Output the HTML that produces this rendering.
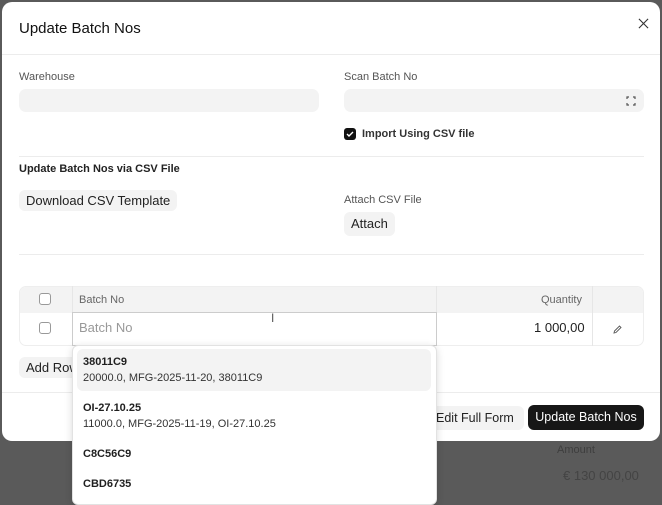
<!DOCTYPE html>
<html><head><meta charset="utf-8"><style>
*{box-sizing:border-box;margin:0;padding:0}
body{width:662px;height:500px;overflow:hidden;background:#5a5a5a;font-family:"Liberation Sans",sans-serif;color:#1f1f1f;position:relative}
.abs{position:absolute;white-space:nowrap}
.modal{left:2px;top:2px;width:658px;height:439px;background:#fff;border-radius:10px}
.lbl{font-size:11px;color:#555}
.inp{background:#f3f3f3;border-radius:7px;height:23px}
.btn{background:#f3f3f3;border-radius:6px;font-size:13px;color:#222;padding:0 7px;line-height:21px}
.hr{height:1px;background:#ececec}
.cb{width:12px;height:12px;border:1px solid #999;border-radius:3px;background:#fff}
</style></head><body>
<div class="abs" style="left:557px;top:444px;font-size:11px;color:#3e3e3e">Amount</div>
<div class="abs" style="left:563px;top:468px;font-size:13px;color:#444">€ 130 000,00</div>
<div class="abs modal"></div>
<div class="abs" style="left:19px;top:20px;font-size:15px;color:#111">Update Batch Nos</div>
<svg class="abs" style="left:638px;top:18px" width="11" height="11" viewBox="0 0 12 12"><path d="M1 1L11 11M11 1L1 11" stroke="#333" stroke-width="1.2"/></svg>
<div class="abs hr" style="left:2px;top:54px;width:658px"></div>
<div class="abs lbl" style="left:19px;top:71px">Warehouse</div>
<div class="abs inp" style="left:19px;top:89px;width:300px"></div>
<div class="abs lbl" style="left:344px;top:71px">Scan Batch No</div>
<div class="abs inp" style="left:344px;top:89px;width:300px"></div>
<svg class="abs" style="left:626px;top:96px" width="10" height="10" viewBox="0 0 10 10" fill="none" stroke="#555" stroke-width="1.2"><path d="M1 3V1H3M7 1H9V3M9 7V9H7M3 9H1V7"/></svg>
<div class="abs" style="left:344px;top:128px;width:12px;height:12px;background:#111;border-radius:3px"></div>
<svg class="abs" style="left:346px;top:130px" width="8" height="8" viewBox="0 0 8 8"><path d="M1 4L3 6L7 2" stroke="#fff" stroke-width="1.4" fill="none"/></svg>
<div class="abs" style="left:362px;top:128px;font-size:11px;font-weight:bold;color:#333">Import Using CSV file</div>
<div class="abs hr" style="left:19px;top:156px;width:625px"></div>
<div class="abs" style="left:19px;top:163px;font-size:11px;font-weight:bold;color:#222">Update Batch Nos via CSV File</div>
<div class="abs btn" style="left:19px;top:190px">Download CSV Template</div>
<div class="abs lbl" style="left:344px;top:194px">Attach CSV File</div>
<div class="abs btn" style="left:344px;top:212px;line-height:24px">Attach</div>
<div class="abs hr" style="left:19px;top:254px;width:625px"></div>
<div class="abs" style="left:19px;top:286px;width:625px;height:60px;border:1px solid #eee;border-radius:7px;overflow:hidden">
 <div style="height:26px;background:#f3f3f3"></div>
</div>
<div class="abs" style="left:72px;top:286px;width:1px;height:60px;background:#e6e6e6"></div>
<div class="abs" style="left:436px;top:286px;width:1px;height:60px;background:#e6e6e6"></div>
<div class="abs" style="left:592px;top:286px;width:1px;height:60px;background:#e6e6e6"></div>
<div class="abs cb" style="left:39px;top:293px"></div>
<div class="abs cb" style="left:39px;top:322px"></div>
<div class="abs lbl" style="left:79px;top:294px;color:#666">Batch No</div>
<div class="abs lbl" style="left:541px;top:294px;color:#666">Quantity</div>
<div class="abs" style="left:72px;top:312px;width:365px;height:34px;border:1px solid #ccc;background:#fff"></div>
<div class="abs" style="left:79px;top:320px;font-size:13px;color:#999">Batch No</div>
<div class="abs" style="left:271px;top:311px;font-size:12px;color:#555">I</div>
<div class="abs" style="left:534px;top:320px;font-size:13px;color:#222">1 000,00</div>
<svg class="abs" style="left:613px;top:325px" width="9" height="9" viewBox="0 0 9 9"><path d="M1 8L1.5 6L6.5 1L8 2.5L3 7.5Z" stroke="#555" stroke-width="0.9" fill="none"/></svg>
<div class="abs btn" style="left:19px;top:357px;width:70px;font-size:13px">Add Row</div>
<div class="abs hr" style="left:2px;top:392px;width:658px"></div>
<div class="abs btn" style="left:426px;top:406px;height:24px;line-height:24px;font-size:12.5px;padding:0 10px">Edit Full Form</div>
<div class="abs" style="left:528px;top:405px;width:116px;height:25px;background:#171717;border-radius:6px;color:#fff;font-size:12.5px;line-height:25px;text-align:center">Update Batch Nos</div>
<div class="abs" style="left:72px;top:345px;width:365px;height:160px;background:#fff;border:1px solid #e2e2e2;border-radius:6px;box-shadow:0 2px 8px rgba(0,0,0,.15)"></div>
<div class="abs" style="left:77px;top:349px;width:354px;height:42px;background:#f3f3f3;border-radius:6px"></div>
<div class="abs" style="left:83px;top:356px;font-size:11px;font-weight:bold">38011C9</div>
<div class="abs" style="left:83px;top:372px;font-size:11px;color:#333">20000.0, MFG-2025-11-20, 38011C9</div>
<div class="abs" style="left:83px;top:402px;font-size:11px;font-weight:bold">OI-27.10.25</div>
<div class="abs" style="left:83px;top:418px;font-size:11px;color:#333">11000.0, MFG-2025-11-19, OI-27.10.25</div>
<div class="abs" style="left:83px;top:448px;font-size:11px;font-weight:bold">C8C56C9</div>
<div class="abs" style="left:83px;top:478px;font-size:11px;font-weight:bold">CBD6735</div>
</body></html>
